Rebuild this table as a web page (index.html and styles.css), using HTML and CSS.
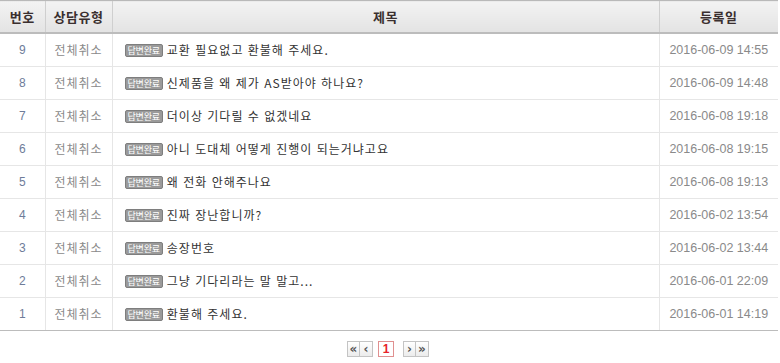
FILE: index.html
```html
<!DOCTYPE html>
<html lang="ko">
<head>
<meta charset="utf-8">
<link rel="stylesheet" href="styles.css">
</head>
<body>
<div class="board">
  <table class="list">
    <colgroup>
      <col class="c-no"><col class="c-type"><col class="c-title"><col class="c-date">
    </colgroup>
    <thead>
      <tr><th>번호</th><th>상담유형</th><th>제목</th><th>등록일</th></tr>
    </thead>
    <tbody>
      <tr><td class="no">9</td><td class="type">전체취소</td><td class="title"><span class="badge">답변완료</span>교환 필요없고 환불해 주세요.</td><td class="date">2016-06-09 14:55</td></tr>
      <tr><td class="no">8</td><td class="type">전체취소</td><td class="title"><span class="badge">답변완료</span>신제품을 왜 제가 AS받아야 하나요?</td><td class="date">2016-06-09 14:48</td></tr>
      <tr><td class="no">7</td><td class="type">전체취소</td><td class="title"><span class="badge">답변완료</span>더이상 기다릴 수 없겠네요</td><td class="date">2016-06-08 19:18</td></tr>
      <tr><td class="no">6</td><td class="type">전체취소</td><td class="title"><span class="badge">답변완료</span>아니 도대체 어떻게 진행이 되는거냐고요</td><td class="date">2016-06-08 19:15</td></tr>
      <tr><td class="no">5</td><td class="type">전체취소</td><td class="title"><span class="badge">답변완료</span>왜 전화 안해주나요</td><td class="date">2016-06-08 19:13</td></tr>
      <tr><td class="no">4</td><td class="type">전체취소</td><td class="title"><span class="badge">답변완료</span>진짜 장난합니까?</td><td class="date">2016-06-02 13:54</td></tr>
      <tr><td class="no">3</td><td class="type">전체취소</td><td class="title"><span class="badge">답변완료</span>송장번호</td><td class="date">2016-06-02 13:44</td></tr>
      <tr><td class="no">2</td><td class="type">전체취소</td><td class="title"><span class="badge">답변완료</span>그냥 기다리라는 말 말고...</td><td class="date">2016-06-01 22:09</td></tr>
      <tr><td class="no">1</td><td class="type">전체취소</td><td class="title"><span class="badge">답변완료</span>환불해 주세요.</td><td class="date">2016-06-01 14:19</td></tr>
    </tbody>
  </table>
  <div class="paging">
    <span class="group">
      <a class="pbtn">«</a><a class="pbtn">‹</a>
    </span>
    <a class="pnum">1</a>
    <span class="group">
      <a class="pbtn">›</a><a class="pbtn">»</a>
    </span>
  </div>
</div>
</body>
</html>
```

FILE: styles.css
```css
html, body {
  margin: 0;
  padding: 0;
  background: #fff;
}
body {
  font-family: "Noto Sans CJK KR", "Noto Sans", sans-serif;
  font-size: 12px;
  color: #333;
}
.board {
  width: 778px;
}
.list {
  width: 778px;
  border-collapse: collapse;
  table-layout: fixed;
}
.c-no { width: 45px; }
.c-type { width: 67px; }
.c-title { width: 547px; }
.c-date { width: 119px; }
.list thead th {
  height: 31px;
  padding: 0;
  background: linear-gradient(#f3f3f3, #e3e3e3);
  border-top: 1px solid #b9b9b9;
  border-bottom: 2px solid #bcbcbc;
  border-left: 1px solid #cfcfcf;
  font-weight: bold;
  font-size: 13px;
  letter-spacing: 0.5px;
  color: #3a2f2f;
  text-align: center;
}
.list thead th:first-child { border-left: 0; }
.list tbody td {
  height: 32px;
  padding: 0;
  border-bottom: 1px solid #e6e6e6;
  border-left: 1px solid #e6e6e6;
  text-align: center;
  line-height: 16px;
}
.list tbody td:first-child { border-left: 0; }
.list tbody tr:last-child td { border-bottom: 1px solid #bcbcbc; }
.no {
  color: #6e7c99;
  font-family: "Liberation Sans", sans-serif;
}
.type {
  color: #8a8a8a;
  letter-spacing: 1px;
}
.title {
  text-align: left !important;
  padding-left: 12px !important;
  color: #333;
  letter-spacing: 1px;
}
.date {
  color: #8a8a8a;
  font-family: "Liberation Sans", sans-serif;
  font-size: 12.5px;
}
.badge {
  display: inline-block;
  vertical-align: 1px;
  height: 11px;
  line-height: 11px;
  padding: 0 2px;
  margin-right: 4px;
  background: #9a9a9a;
  border: 1px solid #7e7e7e;
  border-radius: 2px;
  color: #fff;
  font-size: 9px;
  letter-spacing: -0.2px;
}
.paging {
  display: flex;
  justify-content: center;
  align-items: center;
  gap: 5px;
  margin-top: 10px;
  padding-right: 2px;
}
.group {
  display: flex;
}
.pbtn, .pnum {
  display: flex;
  align-items: center;
  justify-content: center;
  box-sizing: border-box;
  height: 16px;
  font-family: "DejaVu Sans", sans-serif;
  font-size: 12px;
  font-weight: bold;
  text-decoration: none;
  line-height: 1;
}
.pbtn {
  width: 13px;
  border: 1px solid #c4c4c4;
  background: linear-gradient(#ffffff, #ececec);
  color: #555;
}
.pbtn + .pbtn { margin-left: -1px; width: 14px; }
.pnum {
  width: 16px;
  border: 1px solid #e09090;
  color: #e8222a;
  font-family: "Liberation Sans", sans-serif;
  font-size: 12px;
  margin: 0 4px 0 0;
}
```
